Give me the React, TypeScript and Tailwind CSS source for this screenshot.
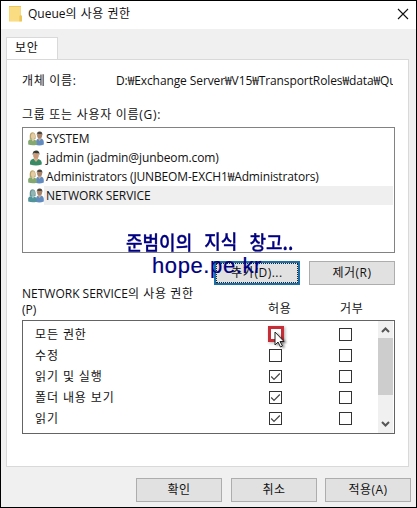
import type { ReactNode } from 'react';

function People({ blue = false }: { blue?: boolean }) {
  return (
    <svg width="16" height="15" viewBox="0 0 16 15" className="shrink-0">
      <path d="M8 14V10.5Q8.4 7.5 11.5 7.2Q15.6 7.4 15.8 11V13.5Q12 15 8 14Z" fill="#628cc0" />
      <path d="M10.4 6.5h2.4v2l-1.2 1.6-1.2-1.6Z" fill="#c8ad94" />
      <ellipse cx="11.6" cy="4.2" rx="2.5" ry="3.2" fill="#a9846b" />
      <path d="M8.8 4Q8.5.6 11.7.5 14.8.6 14.3 4.3L13.6 2.8Q11 3.4 9.5 2.5Z" fill="#4b463f" />
      <path d="M.2 13.5V10.5Q.5 8.2 4 8Q8.2 8.1 8.8 11.5V13.8Q4 15 .2 13.5Z" fill={blue ? '#51949a' : '#83a970'} />
      <path d="M1.8 8Q1 1.4 4.5 1.2 8.2 1.3 7.6 8Z" fill={blue ? '#6a9291' : '#baa366'} />
      <ellipse cx="5" cy="5.2" rx="2" ry="2.9" fill={blue ? '#91b5b4' : '#e4cba3'} />
      <path d="M3.3 8.2h3L5 10.5Z" fill={blue ? '#b3d0d1' : '#e8d5b7'} />
    </svg>
  );
}

function Person() {
  return (
    <svg width="16" height="16" viewBox="0 0 16 16" className="shrink-0">
      <path d="M2 14.5V12Q2.5 9 7.5 8.6 13.2 9 13.7 12.5V14.5Q8 16.5 2 14.5Z" fill="#398b66" />
      <path d="M6 7h4v2.5L8 12 6 9.5Z" fill="#d4b18e" />
      <ellipse cx="8" cy="4.9" rx="2.9" ry="3.7" fill="#c99b7b" />
      <path d="M4.7 5Q4.2.8 8 .5 12 .7 11.3 5L10.4 3Q7.8 3.5 5.8 2.8Z" fill="#2f3c34" />
    </svg>
  );
}

function Button({ children, focused = false }: { children: ReactNode; focused?: boolean }) {
  return (
    <button
      className={
        'flex h-6 w-[86px] items-center justify-center bg-[#e1e1e1] whitespace-nowrap tracking-[0.5px] ' +
        (focused ? 'border-2 border-[#1b6fa8] p-0' : 'border border-[#adadad]')
      }
    >
      {focused ? (
        <span className="flex h-full w-full items-center justify-center border border-dotted border-[#222]">{children}</span>
      ) : (
        children
      )}
    </button>
  );
}

function Check({ checked = false }: { checked?: boolean }) {
  return (
    <span className="block size-[13px] border border-[#333] bg-white">
      {checked && (
        <svg width="11" height="11" viewBox="0 0 11 11" fill="none">
          <path d="M1.2 5.5 4 8.3 9.8 2.5" stroke="#444" strokeWidth="1.2" />
        </svg>
      )}
    </span>
  );
}

const users = [
  { name: 'SYSTEM', icon: <People />, style: 'tracking-[-0.1px]' },
  { name: 'jadmin (jadmin@junbeom.com)', icon: <Person />, style: 'tracking-[-0.1px]' },
  { name: 'Administrators (JUNBEOM-EXCH1₩Administrators)', icon: <People />, style: 'tracking-[-0.15px]' },
  { name: 'NETWORK SERVICE', icon: <People blue />, style: 'tracking-[-0.1px]' },
];

const permissions = [
  { name: '모든 권한', allowed: false },
  { name: '수정', allowed: false },
  { name: '읽기 및 실행', allowed: true },
  { name: '폴더 내용 보기', allowed: true },
  { name: '읽기', allowed: true },
];

export default function App() {
  return (
    <div className="relative flex h-[508px] w-[417px] flex-col overflow-hidden border border-black bg-[#f0f0f0] font-['Open_Sans','Noto_Sans_CJK_KR',sans-serif] text-[12px] leading-[16px] text-[#111]">
      <header className="flex h-7 shrink-0 items-center justify-between bg-white pr-[7px] pb-[2px] pl-2">
        <div className="flex items-center gap-[6px]">
          <svg width="13" height="16" viewBox="0 0 13 16">
            <path d="M0 .5h11.5v15H0Z" fill="#f8d775" />
            <path d="M0 0h12v9l1 1v5.5h-2.5V10L11.5 9V1H0Z" fill="#edc658" />
            <path d="M1 1h10v8l-1 1v5H1Z" fill="#fadd83" />
          </svg>
          <h1>Queue<span className="tracking-[0.5px]">의 사용 권한</span></h1>
        </div>
        <svg width="12" height="12" viewBox="0 0 12 12" fill="none">
          <path d="m1 1 10 10M11 1 1 11" stroke="#111" strokeWidth="1.1" />
        </svg>
      </header>

      <div className="mt-2 ml-[5px] flex h-[22px] w-[52px] shrink-0 border border-b-0 border-[#d9d9d9] bg-white pt-[2px] pl-2 tracking-[0.7px]">보안</div>
      <main className="ml-[5px] flex h-[408px] w-[403px] shrink-0 flex-col border border-[#d9d9d9] bg-white px-[15px]">
        <div className="mt-[13px] flex h-[17px] shrink-0">
          <span className="w-[94px] shrink-0 tracking-[0.7px]">개체 이름:</span>
          <span className="w-[279px] overflow-hidden whitespace-nowrap tracking-[-0.1px]">D:₩Exchange Server₩V15₩TransportRoles₩data₩Queue</span>
        </div>
        <div className="mt-[17px] h-[20px] shrink-0 tracking-[0.72px]">그룹 또는 사용자 이름(G):</div>
        <ul className="h-[126px] w-[373px] shrink-0 border border-[#828282] pt-px">
          {users.map((u, i) => (
            <li key={u.name} className="flex h-[19px] items-center pr-px pl-[5px]">
              {u.icon}
              <span className={'flex h-full flex-1 items-center pl-[2px] whitespace-nowrap ' + u.style + (i === 3 ? ' bg-[#efefef]' : '')}>{u.name}</span>
            </li>
          ))}
        </ul>
        <div className="mt-2 flex w-[373px] shrink-0 justify-end gap-[9px]">
          <Button focused>추가(D)...</Button>
          <Button>제거(R)</Button>
        </div>
        <div className="flex h-[35px] shrink-0">
          <div className="w-[246px] pt-px whitespace-nowrap">NETWORK SERVICE<span className="tracking-[0.6px]">의 사용 권한</span><br />(P)</div>
          <span className="w-[72px] pt-4 tracking-[0.7px]">허용</span>
          <span className="pt-4 tracking-[0.7px]">거부</span>
        </div>
        <div className="flex h-[114px] w-[373px] shrink-0 border border-[#646464]">
          <div className="flex-1 pt-[3px]">
            {permissions.map((p) => (
              <div key={p.name} className="flex h-[21px] items-center">
                <span className="w-[233px] pl-3 tracking-[0.9px]">{p.name}</span>
                <span className="ml-[13px] w-[70px]"><Check checked={p.allowed} /></span>
                <Check />
              </div>
            ))}
          </div>
          <div className="mr-px flex w-[15px] flex-col items-center bg-[#f0f0f0]">
            <svg width="15" height="17" viewBox="0 0 15 17" fill="none" className="shrink-0"><path d="m4 11 3.5-3.5L11 11" stroke="#555" strokeWidth="2" /></svg>
            <div className="h-[57px] w-full shrink-0 bg-[#cdcdcd]" />
            <svg width="15" height="17" viewBox="0 0 15 17" fill="none" className="mt-auto mb-px shrink-0"><path d="m4 7 3.5 3.5L11 7" stroke="#555" strokeWidth="2" /></svg>
          </div>
        </div>
      </main>
      <footer className="mt-[11px] mr-[5px] flex shrink-0 justify-end gap-2">
        <div className="mr-px"><Button>확인</Button></div>
        <Button>취소</Button>
        <Button>적용(A)</Button>
      </footer>

      <div className="absolute top-[224px] left-[125px] origin-left scale-y-110 font-['Noto_Sans_CJK_KR',sans-serif] text-[18px] leading-[30px] font-medium [word-spacing:8px] whitespace-nowrap text-[#000080] [-webkit-text-stroke:0.3px_#000080]">
        <span className="relative top-px">준범이의</span> 지식 <span className="relative top-px">창고..</span>
      </div>
      <div className="absolute top-[252px] left-[151px] font-['Liberation_Sans',sans-serif] text-[22px] leading-[26px] tracking-[0.6px] whitespace-nowrap text-[#000080] [-webkit-text-stroke:0.2px_#000080]">hope.pe.kr</div>
      <div className="absolute top-[325px] left-[267px] size-4 border-3 border-[#c62d36] shadow-[1px_1px_3px_#0005]" />
      <svg width="13" height="19" viewBox="0 0 13 19" className="absolute top-[330px] left-[273px] drop-shadow-[2px_1px_1px_#0006]">
        <path d="M1 1v13l3-3 2.5 5 2-1L6 10.5h4Z" fill="white" stroke="#222" strokeWidth="1" />
      </svg>
    </div>
  );
}
